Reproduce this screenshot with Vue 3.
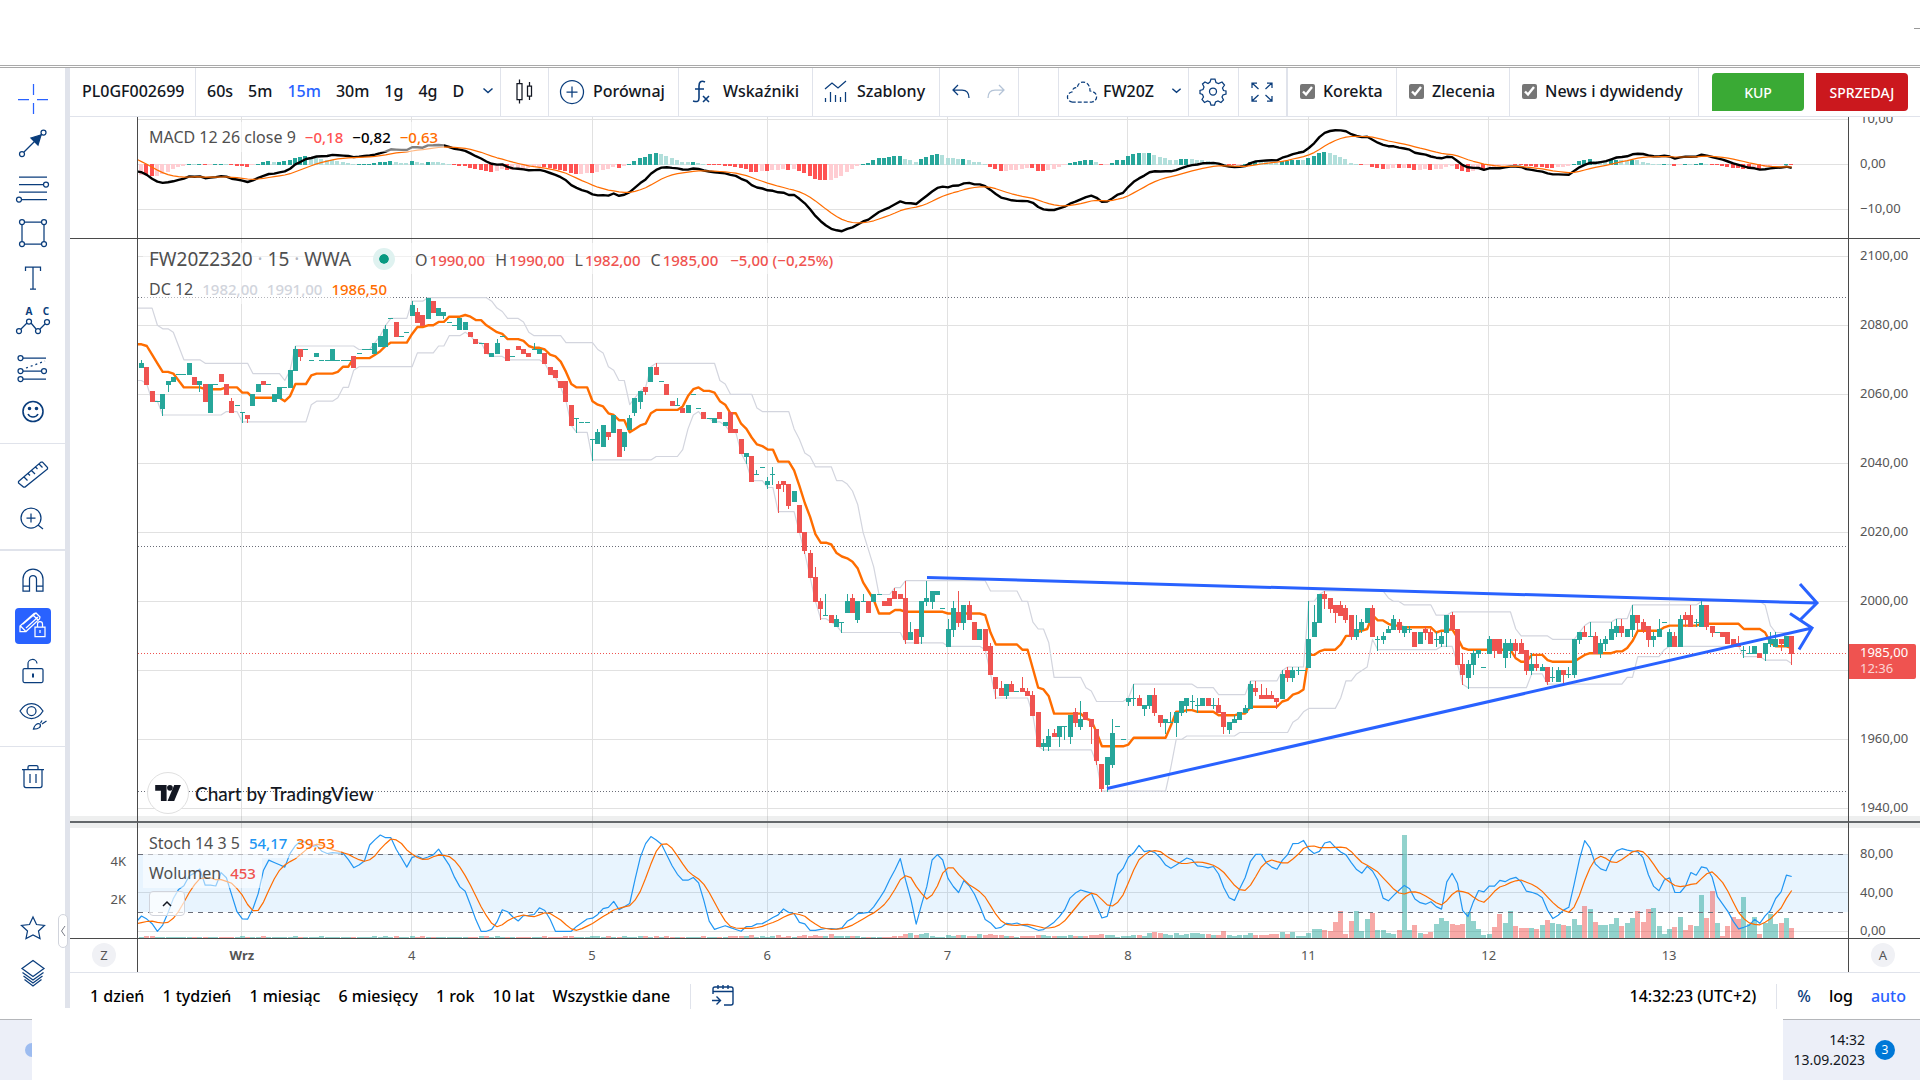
<script setup>
import { ref, computed } from 'vue';

const symbol = ref('PL0GF0026995');
const intervals = ['60s', '5m', '15m', '30m', '1g', '4g', 'D'];
const activeInterval = ref('15m');
const ranges = ['1 dzień', '1 tydzień', '1 miesiąc', '6 miesięcy', '1 rok', '10 lat', 'Wszystkie dane'];
const toggles = ref([
  { label: 'Korekta', checked: true },
  { label: 'Zlecenia', checked: true },
  { label: 'News i dywidendy', checked: true }
]);

// open, high, low, close in points above 1900
const BASE = 1900;
const WARMUP = 20;
const raw = [
  // warm-up bars, left of the visible range
  [184,185,182,183],[183,184,181,182],[182,185,181,184],[184,185,183,184],[184,185,182,183],[183,184,182,183],[183,184,181,182],[182,184,181,183],[183,185,182,184],[184,185,182,183],
  [183,185,181,182],[182,185,179,180],[180,180,177,178],[178,179,176,177],[177,179,174,175],[175,178,171,172],[171,174,167,168],[168,170,165,166],[166,170,164,166],[166,169,164,167],
  // 31.08
  [168,170,168,169],[168,168,163,163],[161,161,158,158],[158,158,158,158],[156,160,154,160],[163,164,161,164],[164,165,164,165],[166,166,166,166],[166,166,166,166],[166,169,166,169],
  [165,165,163,163],[163,164,161,164],[163,163,158,158],[155,163,155,163],[163,163,163,163],[166,166,164,164],[163,163,160,160],[158,159,155,155],[157,157,157,157],
  // 1.09
  [155,155,152,155],[154,154,152,153],[157,160,157,160],[161,163,161,163],[164,164,163,163],[163,163,163,163],[158,160,158,160],[159,162,159,162],[162,162,162,162],[162,167,162,167],
  [167,174,167,173],[173,173,170,171],[173,173,173,173],[170,170,170,170],[171,172,171,172],[170,170,170,170],[170,170,170,170],[170,173,170,173],[170,170,170,170],[170,170,170,170],
  [170,170,170,170],[171,171,168,168],[172,172,172,172],[173,173,173,173],[173,173,173,173],[172,175,172,175],[174,177,174,177],[174,180,174,179],[182,182,182,182],[181,181,177,177],
  [177,177,177,177],[178,178,178,178],
  // 4.09
  [183,187,183,186],[184,185,181,181],[183,183,180,180],[182,188,182,188],[187,187,184,184],[183,185,183,185],[183,184,182,184],[181,181,181,181],[180,180,180,180],[179,182,179,182],
  [179,181,179,181],[178,178,177,177],[176,176,175,175],[175,175,175,175],[175,175,172,172],[171,172,171,172],[172,176,172,175],[177,177,177,177],[173,173,170,170],[171,171,171,171],
  [174,174,173,173],[173,173,172,172],[172,172,171,171],[173,175,173,173],[172,173,172,173],[172,172,169,169],[168,168,166,166],[167,167,165,165],[164,164,162,162],[164,164,158,158],
  [157,157,151,151],[153,153,149,153],[152,152,152,152],[152,152,152,152],
  // 5.09
  [147,147,141,147],[146,150,146,149],[145,151,145,151],[149,149,147,148],[149,154,149,154],[150,150,142,142],[145,149,144,149],[150,154,150,153],[155,159,154,159],[158,161,156,161],
  [162,162,160,161],[164,168,164,168],[168,169,166,166],[164,164,164,164],[163,163,160,160],[158,158,157,157],[157,159,157,157],[156,156,155,155],[155,157,155,157],[160,160,160,160],
  [156,156,156,156],[155,155,153,153],[153,153,153,153],[152,153,152,153],[155,155,153,153],[151,152,151,152],[155,155,149,149],[150,150,149,149],[147,147,143,143],[142,143,140,143],
  [142,142,135,135],[137,138,137,137],[139,139,139,139],
  // 6.09
  [134,136,133,135],[137,139,134,137],[134,135,126,133],[135,135,132,134],[134,134,127,128],[129,132,129,132],[128,128,120,120],[120,120,114,115],[114,115,107,107],[107,110,100,100],
  [100,101,95,98],[96,102,96,96],[96,96,94,94],[93,96,93,95],[94,94,91,94],[97,102,97,100],[101,102,97,97],[95,100,94,100],[100,102,100,100],[100,100,97,97],
  [100,102,100,102],[102,102,102,102],[100,100,99,99],[101,101,99,99],[103,104,101,101],[102,102,101,101],[101,106,88,89],[89,94,89,91],[92,92,88,88],[90,100,88,100],
  [100,106,99,101],[100,103,98,103],[102,103,102,103],[98,98,98,98],
  // 7.09
  [87,95,87,92],[92,100,90,98],[97,103,93,94],[94,99,92,99],[99,100,95,95],[94,94,89,89],[89,92,89,92],[92,92,86,86],[87,88,79,79],[78,78,72,75],
  [75,77,73,73],[73,76,72,76],[76,77,74,74],[74,74,74,74],[75,78,74,74],[74,75,73,73],[73,74,67,67],[68,68,58,58],[58,60,57,59],[58,63,57,61],
  [62,63,61,61],[61,64,58,64],[64,64,60,64],[61,67,59,67],[68,69,64,65],[64,71,63,66],[68,68,66,66],[66,66,59,64],[63,63,53,54],[53,53,45,46],
  [47,55,45,55],[53,66,52,62],[64,64,64,64],[60,60,60,60],
  // 8.09
  [71,72,70,72],[72,76,70,72],[72,73,70,70],[69,70,67,70],[70,73,69,73],[73,75,67,68],[67,67,64,65],[65,66,62,66],[65,68,65,65],[65,68,61,68],
  [68,71,67,71],[70,72,68,72],[71,73,69,71],[70,72,68,70],[70,72,70,72],[72,72,70,70],[70,72,69,70],[70,72,68,68],[68,68,62,64],[63,65,62,65],
  [65,67,65,66],[66,68,66,68],[68,70,68,69],[69,77,69,76],[75,77,73,74],[73,76,72,72],[73,75,72,72],[73,74,72,72],[72,72,69,71],[72,80,72,79],
  [80,81,77,78],[78,81,77,80],[80,81,79,80],[80,80,80,80],
  // 11.09
  [81,100,81,89],[90,99,90,94],[94,102,94,102],[102,103,98,101],[101,101,97,98],[99,99,94,97],[99,100,96,96],[98,99,94,95],[96,96,89,90],[90,96,89,92],
  [92,95,91,94],[94,98,94,98],[98,99,90,90],[89,90,86,89],[89,91,88,90],[91,93,91,92],[92,96,92,95],[94,95,91,92],[91,93,90,93],[92,93,91,92],
  [91,91,87,87],[88,91,88,91],[92,93,89,91],[91,92,88,88],[89,91,87,89],[88,91,87,90],[91,96,87,96],[96,97,92,92],[92,92,82,82],[82,85,76,79],
  [78,83,75,82],[82,86,79,85],[85,86,84,86],[81,81,81,81],
  // 12.09
  [85,90,85,89],[89,89,84,86],[89,89,85,85],[84,89,81,88],[86,89,84,88],[88,89,84,86],[88,89,85,85],[86,86,79,80],[80,85,79,82],[82,85,80,81],
  [80,82,80,81],[81,81,76,77],[78,81,77,78],[77,81,77,80],[80,80,76,79],[79,81,78,79],[79,89,78,89],[89,91,88,91],[91,93,90,90],[90,94,90,90],
  [90,91,85,85],[85,89,84,88],[88,90,86,89],[89,94,89,92],[91,95,90,93],[93,95,90,91],[90,92,90,92],[92,99,90,96],[96,96,92,94],[94,95,91,92],
  [93,93,87,89],[89,91,87,90],[90,95,90,92],[94,94,94,94],
  // 13.09
  [87,92,87,91],[90,91,87,87],[87,96,87,95],[96,97,93,95],[96,99,93,93],[94,95,93,94],[93,100,93,99],[99,99,92,93],[93,93,90,91],[91,91,91,91],
  [91,91,90,90],[91,91,88,88],[89,89,87,87],[88,90,87,87],[86,87,84,86],[85,87,85,85],[85,87,85,87],[85,85,84,84],[85,88,83,88],[88,91,87,89],
  [87,91,87,89],[89,89,86,88],[87,90,87,90],[90,90,82,85]
];

// column heights of the volume pane, one digit per quiet bar
const quietVolumes =
  '1221111111' + '1111111112' + '1112111112' + '1111211111' + '1111212121' + '1212111111' + '1111221211' +
  '1111112111' + '2211122121' + '1211' + '2212121111' + '1121111222' + '2312123121' + '2323224222' +
  '2211111122' + '4534521132' + '3322434332' + '2122233222' + '2322233433' + '1223325654' + '3534554433' +
  '7323353334' + '4';
const volumes = [...quietVolumes].map(Number).concat([
  6, 4, 6, 2, 2, 5, 9, 9, 8, 7, 16, 27, 4, 17, 27, 7, 19, 25, 8, 8, 5, 4, 8, 103, 8, 13, 5, 4, 6, 14, 20, 17,
  14, 13, 14, 26, 17, 9, 3, 4, 11, 24, 15, 27, 12, 10, 10, 10, 9, 13, 18, 15, 14, 13, 12, 19, 13, 32, 29, 16,
  13, 13, 14, 20, 12, 15, 20, 27, 16, 29, 30, 12, 4, 9, 11, 21, 8, 13, 12, 43, 20, 47, 15, 2, 12, 21, 19, 41,
  14, 21, 4, 15, 24, 14, 15, 20, 10
]);

const FIRST_X = 3;
const STEP = 5.306;
const WIDTH = 1710;
const barX = (i) => FIRST_X + i * STEP;
const priceY = (p) => 17.3 + (2100 - p) * 3.451;
const macdY = (v) => 47.3 - v * 4.5;
const stochY = (v) => 108.3 - v * 0.9625;

const days = [
  { bar: 19, label: 'Wrz', bold: true },
  { bar: 51, label: '4' },
  { bar: 85, label: '5' },
  { bar: 118, label: '6' },
  { bar: 152, label: '7' },
  { bar: 186, label: '8' },
  { bar: 220, label: '11' },
  { bar: 254, label: '12' },
  { bar: 288, label: '13' }
];
const priceTicks = [2100, 2080, 2060, 2040, 2020, 2000, 1980, 1960, 1940];
const levels = [2088, 2016, 1945];
const lastPrice = 1985;

function formatNumber(value) {
  return value.toFixed(2).replace('.', ',').replace('-', '−');
}

const bars = raw.map((r, i) => ({
  index: i - WARMUP,
  open: BASE + r[0],
  high: BASE + r[1],
  low: BASE + r[2],
  close: BASE + r[3]
}));

const candles = computed(() => bars.slice(WARMUP).map((b) => {
  const x = Math.round(barX(b.index));
  const top = Math.round(priceY(Math.max(b.open, b.close)));
  const bottom = Math.round(priceY(Math.min(b.open, b.close)));
  return {
    x,
    up: b.close >= b.open,
    top,
    height: Math.max(1, bottom - top + 1),
    wickTop: Math.round(priceY(b.high)),
    wickHeight: Math.max(1, Math.round(priceY(b.low)) - Math.round(priceY(b.high)) + 1)
  };
}));

function toPoints(values, y) {
  return values
    .map((v, i) => ({ i: i - WARMUP, v }))
    .filter((p) => p.i >= -1)
    .map((p) => `${(barX(p.i) + 0.5).toFixed(1)},${y(p.v).toFixed(1)}`)
    .join(' ');
}

function windowOf(list, i, length) {
  return list.slice(Math.max(0, i - length + 1), i + 1);
}

function sma(values, length) {
  return values.map((v, i) => {
    const part = windowOf(values, i, length);
    return part.reduce((a, b) => a + b, 0) / part.length;
  });
}

function ema(values, length, seed) {
  const k = 2 / (length + 1);
  let prev = seed;
  return values.map((v) => (prev = prev + k * (v - prev)));
}

// Donchian channel, 12 bars
const upper = bars.map((b, i) => Math.max(...windowOf(bars, i, 12).map((x) => x.high)));
const lower = bars.map((b, i) => Math.min(...windowOf(bars, i, 12).map((x) => x.low)));
const middle = upper.map((v, i) => (v + lower[i]) / 2);

// MACD 12 26 9
const closes = bars.map((b) => b.close);
const slow = ema(closes, 26, 2071);
const macd = ema(closes, 12, 2083).map((v, i) => v - slow[i]);
const signal = ema(macd, 9, 6);
const histogram = macd.map((v, i) => v - signal[i]);

const histogramBars = computed(() => histogram.slice(WARMUP).map((v, i) => {
  const growing = v >= histogram[i + WARMUP - 1];
  const height = Math.max(1, Math.round(Math.abs(v) * 4.5));
  return {
    x: Math.round(barX(i)) - 2,
    y: v >= 0 ? 48 - height : 47,
    height,
    fill: v >= 0 ? (growing ? '#26a69a' : '#b2dfdb') : (growing ? '#ffcdd2' : '#ff5252')
  };
}));

// Stochastic 14 3 5
const fastK = bars.map((b, i) => {
  const part = windowOf(bars, i, 14);
  const high = Math.max(...part.map((x) => x.high));
  const low = Math.min(...part.map((x) => x.low));
  return high === low ? 50 : ((b.close - low) / (high - low)) * 100;
});
const stochK = sma(fastK, 3);
const stochD = sma(stochK, 5);
</script>

<template>
  <div class="page">
    <header class="browser-edge"><i></i></header>

    <div class="workspace">
      <nav class="sidebar" aria-label="Narzędzia rysowania">
        <div class="tool-group">
          <button class="tool selected" aria-label="Kursor">
            <svg viewBox="0 0 36 36"><path d="M18.500 4v11M18.500 23v11M3 19.500h11M22 19.500h11" /></svg>
          </button>
          <button class="tool" aria-label="Linia trendu">
            <svg viewBox="0 0 36 36"><path d="M9 27L27 9" /><path class="solid" d="M26 10l-3 10-7-7z" /><circle cx="7" cy="29" r="2.500" /><circle cx="28.500" cy="7.500" r="2.500" /></svg>
          </button>
          <button class="tool" aria-label="Zniesienia">
            <svg viewBox="0 0 36 36"><path d="M4 7h28M4 14.500h24M4 22h28M7 29.500h25" /><circle cx="31" cy="14.500" r="2.500" /><circle cx="4" cy="29.500" r="2.500" /></svg>
          </button>
          <button class="tool" aria-label="Kształty">
            <svg viewBox="0 0 36 36"><path d="M9.500 7h17M9.500 29h17M7 9.500v17M29 9.500v17" /><circle cx="7" cy="7" r="2.500" /><circle cx="29" cy="7" r="2.500" /><circle cx="7" cy="29" r="2.500" /><circle cx="29" cy="29" r="2.500" /></svg>
          </button>
          <button class="tool" aria-label="Tekst">
            <svg viewBox="0 0 36 36"><path d="M10.500 11V7h15v4M18 7v22M15 29h6" /></svg>
          </button>
          <button class="tool" aria-label="Formacje">
            <svg viewBox="0 0 36 36"><path d="M6 24l6-6M16 18l5 6M25 24l5-5" /><circle cx="4" cy="26" r="2.500" /><circle cx="14" cy="16.500" r="2.500" /><circle cx="23" cy="26" r="2.500" /><circle cx="32" cy="17" r="2.500" /><text x="14" y="10">A</text><text x="31" y="10">C</text></svg>
          </button>
          <button class="tool" aria-label="Prognozy">
            <svg viewBox="0 0 36 36"><path d="M8 8h23M8 21h18M8 29h23" /><path stroke-dasharray="2 3" d="M11 18l19-7" /><circle cx="5.500" cy="8" r="2.500" /><circle cx="5.500" cy="21" r="2.500" /><circle cx="29" cy="21" r="2.500" /><circle cx="5.500" cy="29" r="2.500" /></svg>
          </button>
          <button class="tool" aria-label="Ikony">
            <svg viewBox="0 0 36 36" class="bold"><circle cx="18" cy="16.500" r="10" /><path d="M13 19c2 4 8 4 10 0" /><circle class="solid" cx="14.500" cy="13.500" r="1" /><circle class="solid" cx="21.500" cy="13.500" r="1" /></svg>
          </button>
        </div>
        <div class="tool-group">
          <button class="tool" aria-label="Linijka">
            <svg viewBox="0 0 36 36"><path d="M3.500 25.500L26 6l1.500 0 5 5.500v1.500L10 31H8.500l-5-4zM9 21l3.500 3.500M13 17.500l2 2M16.500 14.500l3.500 3.500M20.500 11l2 2M24 8l3.500 3.500" /></svg>
          </button>
          <button class="tool" aria-label="Powiększ">
            <svg viewBox="0 0 36 36"><circle cx="16" cy="17" r="10" /><path d="M16 12.500v9M11.500 17h9M23 24l5 4" /></svg>
          </button>
        </div>
        <div class="tool-group wide-line">
          <button class="tool" aria-label="Magnes">
            <svg viewBox="0 0 36 36"><path d="M8 28V16a10 10 0 0 1 20 0v12h-6.500V16a3.500 3.500 0 0 0-7 0v12zM8 23h6.500M21.500 23H28" /></svg>
          </button>
          <button class="tool filled" aria-label="Tryb rysowania">
            <svg viewBox="0 0 36 36"><path d="M5 23v-5L19 5.500l2-.5 4 4-.5 2L11 23.500H5zM5.500 18l5 5M8 16l13-11M11 20l12-11M18 7l5 5" /><path d="M20 19h10v9.500H20zM22.500 19v-3a2.500 2.500 0 0 1 5 0v3M25 22v3" /></svg>
          </button>
          <button class="tool" aria-label="Zablokuj rysunki">
            <svg viewBox="0 0 36 36"><rect x="8" y="15.500" width="20" height="14" rx="1.500" /><path d="M13 15.500v-4a4.500 4.500 0 0 1 9-1" /><path d="M18 20.500v4" stroke-width="2" /></svg>
          </button>
          <button class="tool" aria-label="Ukryj rysunki">
            <svg viewBox="0 0 36 36"><path d="M5 13c6-10 17-10 23 0-6 10-17 10-23 0z" /><circle cx="16.500" cy="13" r="4.500" /><path d="M18.500 31c1-4 3.500-6 6.500-5 1.500 3-1 5-6.500 5zM25.500 25l1.500-2.500M27 26l4.500-3" /></svg>
          </button>
        </div>
        <div class="tool-group">
          <button class="tool" aria-label="Usuń">
            <svg viewBox="0 0 36 36"><path d="M7 10.500h22M9 10.500v16q0 2 2 2h14q2 0 2-2v-16M13 10.500V8q0-1.500 1.500-1.500h7q1.500 0 1.500 1.500v2.500M15 15v9M21 15v9" /></svg>
          </button>
        </div>
        <div class="tool-group last">
          <button class="tool" aria-label="Ulubione">
            <svg viewBox="0 0 36 36"><path d="M18 6l3.500 7.500 8 1-6 5.500 1.500 7.500-7-3.500-7 3.500 1.500-7.500-6-5.500 8-1z" /></svg>
          </button>
          <button class="tool" aria-label="Drzewo obiektów">
            <svg viewBox="0 0 36 36"><path d="M18 4.500l11 8-11 8-11-8zM7.500 16.500L18 24l10.500-7.500M8.500 20L18 27l9.500-7M9.500 23.500L18 30l8.500-6.500" /></svg>
          </button>
        </div>
        <button class="collapse" aria-label="Zwiń pasek">
          <svg viewBox="0 0 8 16"><path d="M6 3L2.500 8 6 13" /></svg>
        </button>
      </nav>

      <main class="content">
        <div class="toolbar">
          <div class="cell symbol-cell"><input v-model="symbol" class="symbol" type="text" aria-label="Symbol" /></div>
          <div class="cell intervals">
            <button
              v-for="item in intervals"
              :key="item"
              :class="{ active: item === activeInterval }"
              @click="activeInterval = item"
            >{{ item }}</button>
            <button class="more" aria-label="Więcej interwałów"><svg class="chevron" viewBox="0 0 12 8"><path d="M1.500 1.500L6 5.500l4.500-4" /></svg></button>
          </div>
          <button class="cell centered dark" aria-label="Typ wykresu">
            <svg class="icon" viewBox="0 0 36 36"><path d="M11 10.500h5v16h-5zM13.500 6.500v4M13.500 26.500v4M21.500 13h4v10h-4zM23.500 9v4M23.500 23v4" /></svg>
          </button>
          <button class="cell">
            <svg class="icon" viewBox="0 0 36 36"><circle cx="18" cy="19" r="11.500" /><path d="M18 13.500v11M12.500 19h11" /></svg>Porównaj
          </button>
          <button class="cell">
            <svg class="icon thick" viewBox="0 0 36 36"><path d="M21 9c-4-2-6 0-6 4v12c0 4-2 4-6 3M11 16h9M19 23l6 6M25 23l-6 6" /></svg>Wskaźniki
          </button>
          <button class="cell">
            <svg class="icon" viewBox="0 0 36 36"><path d="M7 16l7-6 6 5 8-7M7.500 29v-4M12.500 29V19M17.500 29v-7M22.500 29v-5M27.500 29V19" /></svg>Szablony
          </button>
          <div class="cell history">
            <button aria-label="Cofnij"><svg class="icon" viewBox="0 0 36 36"><path d="M15 12l-5 5 5 5M10 17h9q7 0 7 8" /></svg></button>
            <button aria-label="Ponów" disabled><svg class="icon" viewBox="0 0 36 36"><path d="M20 12l5 5-5 5M25 17h-9q-7 0-7 8" /></svg></button>
          </div>
          <div class="cell"></div>
          <button class="cell">
            <svg class="icon" viewBox="0 0 36 36"><path stroke-dasharray="4 2" d="M9 29a5 5 0 0 1-1-10c0-3 3-5 5-4 1-4 3-6 6-6 4 0 7 3 7 9 9 1 8 10 2 11z" /></svg>FW20Z
            <svg class="chevron" viewBox="0 0 12 8"><path d="M1.500 1.500L6 5.500l4.500-4" /></svg>
          </button>
          <button class="cell centered" aria-label="Ustawienia">
            <svg class="icon" viewBox="0 0 36 36"><path d="M16 6h4l1 3.500 2.500 1L27 9l2.500 3-2 3 1 2.500 2.500.5v3l-3 1-1 2 1.500 3-2.500 2.500-3-1.500-2.500 1-1 3h-3.500l-1-3-2.500-1-3 1.500L7 26.500 8.500 24l-1-2.500-2.500-1v-3L8 16.500 9 14l-1.500-3L10 9l3 1.500L15 9z" /><circle cx="18" cy="18.500" r="3.500" /></svg>
          </button>
          <button class="cell centered thick-line" aria-label="Pełny ekran">
            <svg class="icon" viewBox="0 0 36 36"><path d="M8 15v-5h5M8 10l6.500 6M23 10h5v5M28 10l-6.500 6M8 23v5h5M8 28l6.500-6M23 28h5v-5M28 28l-6.500-6" /></svg>
          </button>
          <label v-for="toggle in toggles" :key="toggle.label" class="cell toggle">
            <input v-model="toggle.checked" type="checkbox" />{{ toggle.label }}
          </label>
          <div class="orders">
            <button class="order buy">KUP</button>
            <button class="order sell">SPRZEDAJ</button>
          </div>
        </div>

        <div class="chart">
          <div class="scale left macd-row"></div>
          <section class="pane macd-row">
            <svg class="plot" viewBox="0 0 1710 121" preserveAspectRatio="none">
              <line v-for="day in days" :key="day.label" class="grid" :x1="barX(day.bar)" :x2="barX(day.bar)" y1="0" y2="121" />
              <line v-for="v in [10, 0, -10]" :key="v" class="grid" x1="0" :x2="WIDTH" :y1="macdY(v)" :y2="macdY(v)" />
              <rect v-for="(bar, i) in histogramBars" :key="i" :x="bar.x" :y="bar.y" width="4" :height="bar.height" :fill="bar.fill" />
              <polyline class="macd-line" :points="toPoints(macd, macdY)" />
              <polyline class="signal-line" :points="toPoints(signal, macdY)" />
            </svg>
            <div class="legend macd-legend">
              <div class="legend-row"><span>MACD 12 26 close 9</span><b class="negative">−0,18</b><b class="black">−0,82</b><b class="orange">−0,63</b></div>
            </div>
          </section>
          <svg class="scale macd-row" viewBox="0 0 71 121">
            <text v-for="v in [10, 0, -10]" :key="v" x="11" :y="macdY(v) + 4">{{ formatNumber(v) }}</text>
          </svg>

          <div class="scale left price-row"></div>
          <section class="pane price-row">
            <svg class="plot" viewBox="0 0 1710 582" preserveAspectRatio="none">
              <line v-for="day in days" :key="day.label" class="grid" :x1="barX(day.bar)" :x2="barX(day.bar)" y1="0" y2="582" />
              <line v-for="p in priceTicks" :key="p" class="grid" x1="0" :x2="WIDTH" :y1="priceY(p)" :y2="priceY(p)" />
              <line v-for="p in levels" :key="p" class="level" x1="0" :x2="WIDTH" :y1="priceY(p)" :y2="priceY(p)" />
              <line class="level last" x1="0" :x2="WIDTH" :y1="priceY(lastPrice)" :y2="priceY(lastPrice)" />
              <polyline class="channel" :points="toPoints(upper, priceY)" />
              <polyline class="channel" :points="toPoints(lower, priceY)" />
              <polyline class="middle" :points="toPoints(middle, priceY)" />
              <g v-for="(candle, i) in candles" :key="i" :class="['candle', candle.up ? 'up' : 'down']">
                <rect :x="candle.x" :y="candle.wickTop" width="1" :height="candle.wickHeight" />
                <rect :x="candle.x - 2" :y="candle.top" width="5" :height="candle.height" />
              </g>
              <path class="trend" d="M789 338.500L1679 364M1662 345L1679 364L1662 381" />
              <path class="trend" d="M969 549.500L1674 389M1652 374.500L1674 389L1661 410.500" />
            </svg>
            <div class="legend price-legend">
              <div class="legend-row title-row">
                <h1>FW20Z2320 <i>·</i> 15 <i>·</i> WWA</h1>
                <span class="status"></span>
                <span class="ohlc">O<b>1990,00</b></span><span class="ohlc">H<b>1990,00</b></span><span class="ohlc">L<b>1982,00</b></span><span class="ohlc">C<b>1985,00</b></span><span class="ohlc"><b>−5,00 (−0,25%)</b></span>
              </div>
              <div class="legend-row"><span>DC 12</span><b class="faint">1982,00</b><b class="faint">1991,00</b><b class="orange">1986,50</b></div>
            </div>
            <a class="credit" href="#">
              <span class="credit-logo"><svg viewBox="0 0 28 20"><path d="M0 1h12v17H6V7H0z" /><circle cx="15.500" cy="4" r="3" /><path d="M20 1h7l-7 17h-7z" /></svg></span>
              Chart by TradingView
            </a>
          </section>
          <div class="scale price-row">
            <svg class="plot" viewBox="0 0 71 582">
              <text v-for="p in priceTicks.filter((t) => t !== 1980)" :key="p" x="11" :y="priceY(p) + 4">{{ formatNumber(p) }}</text>
            </svg>
            <div class="price-tag"><span>1985,00</span><span class="countdown">12:36</span></div>
          </div>

          <svg class="scale left stoch-row" viewBox="0 0 67 115">
            <text x="56" y="43" text-anchor="end">4K</text>
            <text x="56" y="81" text-anchor="end">2K</text>
          </svg>
          <section class="pane stoch-row">
            <svg class="plot" viewBox="0 0 1710 115" preserveAspectRatio="none">
              <line v-for="day in days" :key="day.label" class="grid" :x1="barX(day.bar)" :x2="barX(day.bar)" y1="0" y2="115" />
              <line v-for="v in [80, 40, 0]" :key="v" class="grid" x1="0" :x2="WIDTH" :y1="stochY(v)" :y2="stochY(v)" />
              <rect class="zone" x="0" :y="stochY(80)" :width="WIDTH" :height="stochY(20) - stochY(80)" />
              <rect
                v-for="(v, i) in volumes"
                :key="i"
                :class="['volume', candles[i].up ? 'up' : 'down']"
                :x="candles[i].x - 2"
                :y="115 - v"
                width="5"
                :height="v"
              />
              <line v-for="v in [80, 20]" :key="v" class="bound" x1="0" :x2="WIDTH" :y1="stochY(v)" :y2="stochY(v)" />
              <polyline class="stoch-k" :points="toPoints(stochK, stochY)" />
              <polyline class="stoch-d" :points="toPoints(stochD, stochY)" />
            </svg>
            <div class="legend stoch-legend">
              <div class="legend-row"><span>Stoch 14 3 5</span><b class="blue">54,17</b><b class="orange">39,53</b></div>
              <div class="legend-row"><span>Wolumen</span><b class="red">453</b></div>
              <button class="legend-toggle" aria-label="Zwiń legendę"><svg viewBox="0 0 12 8"><path d="M2 6l4-4 4 4" /></svg></button>
            </div>
          </section>
          <svg class="scale stoch-row" viewBox="0 0 71 115">
            <text v-for="v in [80, 40, 0]" :key="v" x="11" :y="stochY(v) + 4">{{ formatNumber(v) }}</text>
          </svg>

          <div class="scale left axis-row"><button class="round">Z</button></div>
          <svg class="axis pane axis-row" viewBox="0 0 1710 33" preserveAspectRatio="none">
            <text v-for="day in days" :key="day.label" :class="{ strong: day.bold }" :x="barX(day.bar)" y="21" text-anchor="middle">{{ day.label }}</text>
          </svg>
          <div class="scale axis-row"><button class="round">A</button></div>
        </div>

        <div class="bottom-bar">
          <button v-for="range in ranges" :key="range">{{ range }}</button>
          <span class="divider"></span>
          <button class="goto" aria-label="Przejdź do daty">
            <svg viewBox="0 0 24 24"><path d="M2 10V5q0-2 2-2h16q2 0 2 2v14q0 2-2 2h-7M2 7.500h20M7 1v4M12 1v4M17 1v4M1 16.500h8M5.500 12.500l4 4-4 4" /></svg>
          </button>
          <button class="clock">14:32:23 (UTC+2)</button>
          <span class="divider"></span>
          <button class="percent">%</button>
          <button>log</button>
          <button class="active">auto</button>
        </div>
      </main>
    </div>

    <footer class="taskbar">
      <div class="task-left"><i></i></div>
      <div class="task-right">
        <div class="datetime"><span>14:32</span><span>13.09.2023</span></div>
        <span class="badge">3</span>
      </div>
    </footer>
  </div>
</template>

<style>
body {
  margin: 0;
  background: #fff;
}
</style>

<style scoped>
.page {
  font-family: 'Noto Sans', 'Open Sans', sans-serif;
  font-size: 16px;
  color: #131722;
  background: #fff;
  overflow: hidden;
}

button {
  font: inherit;
  color: inherit;
  background: none;
  border: 0;
  padding: 0;
  cursor: pointer;
  white-space: nowrap;
}

svg {
  display: block;
}

.browser-edge {
  height: 65px;
  border-bottom: 3px double #a9a9a9;
  display: flex;
  justify-content: flex-end;
}

.browser-edge i {
  width: 6px;
  height: 1px;
  margin-top: 28px;
  background: #999;
}

.workspace {
  display: flex;
}

/* Drawing tools */
.sidebar {
  position: relative;
  flex: none;
  width: 65px;
  margin-bottom: 11px;
  border-right: 5px solid #e0e3eb;
  display: flex;
  flex-direction: column;
}

.tool-group {
  padding: 7px 0 8px;
  border-top: 1px solid #e0e3eb;
}

.tool-group:first-child {
  border-top: 0;
}

.tool-group.wide-line {
  border-top-width: 2px;
}

.tool-group.last {
  margin-top: auto;
  padding-bottom: 12px;
  border-top: 0;
}

.tool {
  width: 65px;
  height: 45px;
  display: flex;
  align-items: center;
  justify-content: center;
}

.tool svg,
.icon {
  width: 36px;
  height: 36px;
  flex: none;
  fill: none;
  stroke: #0a3d7c;
  stroke-width: 1.25;
}

.tool svg.bold,
.icon.thick {
  stroke-width: 1.6;
}

.tool svg .solid {
  fill: #0a3d7c;
}

.tool svg {
  overflow: visible;
}

.tool svg text {
  font-size: 10px;
  font-weight: 700;
  text-anchor: middle;
  fill: #0a3d7c;
  stroke: none;
}

.tool.selected svg {
  stroke: #2962ff;
}

.tool.filled svg {
  background: #2962ff;
  border-radius: 4px;
  stroke: #fff;
}

.collapse {
  position: absolute;
  right: -3px;
  top: 846px;
  width: 10px;
  height: 34px;
  background: #fff;
  border: 1px solid #d1d4dc;
  border-radius: 5px;
}

.collapse svg {
  width: 8px;
  height: 16px;
  margin: auto;
  fill: none;
  stroke: #787b86;
}

.content {
  flex: 1;
  min-width: 0;
}

/* Toolbar */
.toolbar {
  display: grid;
  grid-template-columns: 126px 305px 48px 130px 134px 127px 79px 40px 130px 50px 49px 109px 113px 189px 1fr;
  height: 48px;
  border-bottom: 1px solid #e0e3eb;
  font-weight: 500;
}

.cell {
  display: flex;
  align-items: center;
  gap: 3px;
  padding: 0 6px 2px 5px;
  border-right: 1px solid #e0e3eb;
  white-space: nowrap;
}

.cell.thick-line {
  border-right-width: 2px;
}

.cell.centered {
  justify-content: center;
}

.cell.dark .icon {
  stroke: #131722;
}

.symbol-cell {
  padding: 0 10px 2px 12px;
}

.symbol {
  width: 102px;
  padding: 0;
  border: 0;
  outline: 0;
  font: inherit;
  color: inherit;
  background: none;
}

.intervals {
  gap: 15px;
  padding: 0 12px 2px 11px;
}

.more {
  padding-left: 3px;
}

.active {
  color: #2962ff;
}

.chevron {
  width: 12px;
  height: 8px;
  fill: none;
  stroke: #0a3d7c;
  stroke-width: 1.5;
}

.cell > .chevron {
  margin-left: 14px;
}

.history {
  gap: 0;
  padding: 0 3px 2px;
}

.history button:disabled {
  opacity: 0.3;
}

.toggle {
  gap: 8px;
  padding: 0 12px 2px;
}

.toggle input {
  width: 15px;
  height: 15px;
  margin: 0;
  accent-color: #767676;
}

.orders {
  display: flex;
  align-items: center;
  justify-content: flex-end;
  gap: 12px;
  padding-right: 12px;
}

.order {
  width: 92px;
  height: 38px;
  font-size: 14px;
  color: #fff;
}

.buy {
  background: #3aaa35;
  border-radius: 4px 0 4px 0;
}

.sell {
  background: #cb181e;
  border-radius: 0 4px 4px 0;
}

/* Chart */
.chart {
  position: relative;
  display: grid;
  grid-template-columns: 67px 1fr 71px;
  border-bottom: 1px solid #e0e3eb;
}

.pane {
  position: relative;
  min-width: 0;
  border-left: 1px solid #4a4a4a;
  border-right: 1px solid #4a4a4a;
}

.plot {
  width: 100%;
  height: 100%;
}

.scale {
  position: relative;
  width: 100%;
}

.scale text,
.axis text {
  font-size: 13px;
  fill: #555;
}

.axis .strong {
  font-weight: 700;
}

.macd-row {
  height: 121px;
  border-bottom: 1px solid #4a4a4a;
}

.price-row {
  height: 582px;
  border-bottom: 2px solid #6a6d70;
}

.price-row::after {
  content: '';
  position: absolute;
  left: 0;
  right: 0;
  bottom: -7px;
  height: 12px;
  background: rgba(42, 46, 57, 0.08);
  z-index: 1;
}

.stoch-row {
  height: 115px;
  border-bottom: 1px solid #4a4a4a;
}

.axis-row {
  height: 33px;
}

.axis {
  width: 100%;
  box-sizing: border-box;
}

.axis-row .round {
  margin: 4px 0 0 22px;
}

.round {
  width: 24px;
  height: 24px;
  border-radius: 50%;
  background: #f0f1f5;
  color: #555;
  font-size: 13px;
}

.grid {
  stroke: #e1e1e1;
  shape-rendering: crispEdges;
}

.level {
  stroke: #6a6d78;
  stroke-dasharray: 1 2;
  shape-rendering: crispEdges;
}

.level.last {
  stroke: #ef5350;
}

polyline {
  fill: none;
  stroke-linejoin: round;
}

.macd-line {
  stroke: #000;
  stroke-width: 2.4;
}

.signal-line {
  stroke: #ff6d00;
  stroke-width: 1.2;
}

.channel {
  stroke: #d3d5de;
  stroke-width: 1.2;
}

.middle {
  stroke: #ff6d00;
  stroke-width: 2.4;
}

.candle {
  shape-rendering: crispEdges;
}

.up {
  fill: #26a69a;
}

.down {
  fill: #ef5350;
}

.volume {
  opacity: 0.5;
}

.trend {
  fill: none;
  stroke: #2962ff;
  stroke-width: 3;
}

.zone {
  fill: #2196f3;
  opacity: 0.1;
}

.bound {
  stroke: #6a6d78;
  stroke-dasharray: 5 5;
  shape-rendering: crispEdges;
}

.stoch-k {
  stroke: #2196f3;
  stroke-width: 1.2;
}

.stoch-d {
  stroke: #ff6d00;
  stroke-width: 1.2;
}

.legend {
  position: absolute;
  left: 5px;
  top: 4px;
  display: flex;
  flex-direction: column;
  align-items: flex-start;
  color: #4f4f4f;
}

.legend-row {
  display: flex;
  align-items: center;
  gap: 9px;
  height: 30px;
  padding: 0 6px;
  background: rgba(255, 255, 255, 0.5);
  white-space: nowrap;
}

.legend b {
  font-size: 15px;
  font-weight: 500;
}

.macd-legend,
.stoch-legend {
  top: 5px;
}

.title-row {
  height: 31px;
  gap: 10px;
}

h1 {
  margin: 0;
  font-size: 19px;
  font-weight: 400;
}

h1 i {
  font-style: normal;
  color: #b2b5be;
}

.status {
  width: 10px;
  height: 10px;
  margin: 0 10px 0 12px;
  border: 6px solid #dff2f0;
  border-radius: 50%;
  background: #089981;
  background-clip: padding-box;
}

.ohlc {
  padding-top: 2px;
}

.ohlc b {
  margin-left: 2px;
  color: #ef5350;
}

.legend .negative {
  color: #ff5252;
}

.legend .red {
  color: #ef5350;
}

.legend .black {
  color: #000;
}

.legend .orange {
  color: #ff6d00;
}

.legend .blue {
  color: #2196f3;
}

.legend .faint {
  color: #d1d4dc;
}

.legend-toggle {
  width: 36px;
  height: 25px;
  margin: 3px 0 0 6px;
  border: 1px solid #d1d4dc;
  border-radius: 4px;
  background: rgba(255, 255, 255, 0.7);
}

.legend-toggle svg {
  width: 12px;
  height: 8px;
  margin: auto;
  fill: none;
  stroke: #131722;
  stroke-width: 1.5;
}

.credit {
  position: absolute;
  left: 9px;
  bottom: 7px;
  display: flex;
  align-items: center;
  gap: 6px;
  font-family: Lato, sans-serif;
  font-size: 19px;
  font-weight: 500;
  color: #131722;
  text-decoration: none;
}

.credit-logo {
  width: 40px;
  height: 40px;
  display: flex;
  align-items: center;
  justify-content: center;
  border: 1px solid #e0e0e0;
  border-radius: 50%;
  background: #fff;
}

.credit-logo svg {
  width: 27px;
  height: 19px;
  fill: #131722;
}

.price-tag {
  position: absolute;
  left: 0;
  top: 405px;
  width: 56px;
  height: 31px;
  padding: 0 0 4px 11px;
  display: flex;
  flex-direction: column;
  justify-content: center;
  font-size: 13px;
  line-height: 16px;
  color: #fff;
  background: #ef5350;
  border-radius: 0 2px 2px 0;
}

.countdown {
  opacity: 0.75;
}

/* Range bar */
.bottom-bar {
  display: flex;
  align-items: center;
  gap: 18px;
  height: 46px;
  padding: 0 14px 0 20px;
  color: #000;
  font-weight: 500;
}

.bottom-bar .active {
  color: #2962ff;
}

.divider {
  width: 1px;
  height: 25px;
  margin: 0 2px;
  background: #e0e3eb;
}

.goto svg {
  width: 24px;
  height: 24px;
  fill: none;
  stroke: #0a3d7c;
  stroke-width: 1.4;
}

.clock {
  margin-left: auto;
}

.percent {
  color: #0a3d7c;
}

/* System taskbar */
.taskbar {
  display: flex;
  justify-content: space-between;
  height: 61px;
}

.task-left,
.task-right {
  border-top: 1px solid #b4b6ba;
  background: #eceff8;
}

.task-left {
  width: 32px;
  display: flex;
  align-items: center;
  justify-content: flex-end;
}

.task-left i {
  width: 7px;
  height: 14px;
  border-radius: 7px 0 0 7px;
  background: #9dbcf0;
}

.task-right {
  width: 137px;
  display: flex;
  align-items: center;
  justify-content: flex-end;
  gap: 10px;
  padding-right: 25px;
  box-sizing: border-box;
  font-size: 14px;
}

.datetime {
  display: flex;
  flex-direction: column;
  align-items: flex-end;
  line-height: 20px;
}

.badge {
  width: 20px;
  height: 20px;
  line-height: 20px;
  border-radius: 50%;
  background: #0078d7;
  color: #fff;
  font-size: 12px;
  text-align: center;
}
</style>
